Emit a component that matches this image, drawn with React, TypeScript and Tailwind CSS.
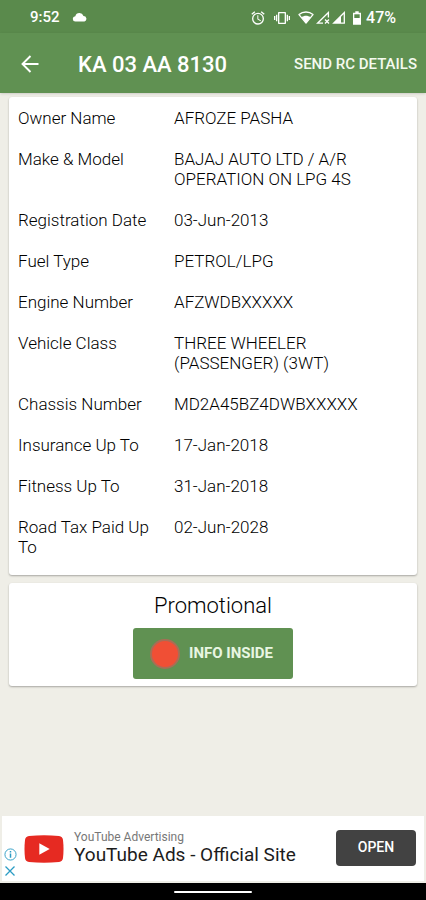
interface Detail {
  label: string;
  value: string;
}

const details: Detail[] = [
  { label: "Owner Name", value: "AFROZE PASHA" },
  { label: "Make & Model", value: "BAJAJ AUTO LTD / A/R OPERATION ON LPG 4S" },
  { label: "Registration Date", value: "03-Jun-2013" },
  { label: "Fuel Type", value: "PETROL/LPG" },
  { label: "Engine Number", value: "AFZWDBXXXXX" },
  { label: "Vehicle Class", value: "THREE WHEELER (PASSENGER) (3WT)" },
  { label: "Chassis Number", value: "MD2A45BZ4DWBXXXXX" },
  { label: "Insurance Up To", value: "17-Jan-2018" },
  { label: "Fitness Up To", value: "31-Jan-2018" },
  { label: "Road Tax Paid Up To", value: "02-Jun-2028" },
];

function StatusBar() {
  return (
    <div className="flex h-[33px] items-center bg-[#5a8a4c] px-[30px] pt-0.5 text-white">
      <span className="text-[15px] font-medium">9:52</span>
      {/* Weather */}
      <svg viewBox="0 0 16 10" className="ml-3 h-[9px] w-4" fill="currentColor">
        <path d="M3 9.4a2.9 2.9 0 0 1-.2-5.800A4.800 4.800 0 0 1 11.900 3.200 3.200 3.200 0 0 1 13 9.400Z" />
      </svg>
      <div className="ml-auto flex items-center">
        {/* Alarm */}
        <svg viewBox="0 0 24 24" className="h-4 w-4" fill="currentColor">
          <path d="m22 5.720-4.600-3.860-1.290 1.530 4.600 3.860L22 5.720zM7.880 3.390 6.600 1.860 2 5.710l1.290 1.530 4.590-3.850zM12.500 8H11v6l4.750 2.850.75-1.230-4-2.370V8zM12 4a9 9 0 1 0 0 18 9 9 0 0 0 0-18zm0 16a7 7 0 1 1 0-14 7 7 0 0 1 0 14z" />
        </svg>
        {/* Vibrate */}
        <svg viewBox="0 0 24 24" className="ml-2 h-4 w-4" fill="currentColor">
          <path d="M0 15h2V9H0v6zm3 2h2V7H3v10zm19-8v6h2V9h-2zm-3 8h2V7h-2v10zM16.500 3h-9C6.670 3 6 3.670 6 4.500v15c0 .83.67 1.500 1.500 1.500h9c.83 0 1.500-.67 1.500-1.500v-15c0-.83-.67-1.500-1.500-1.500zM16 19H8V5h8v14z" />
        </svg>
        {/* Wi-Fi */}
        <svg viewBox="0 0 16 13" className="ml-2 h-[13px] w-4">
          <path d="M1 3.600C5 .1 11 .1 15 3.600L8 12Z" fill="none" stroke="currentColor" strokeWidth="1.300" strokeLinejoin="round" />
          <path d="M3.600 6.300c2.600-2 6.200-2 8.800 0L8 12Z" fill="currentColor" />
        </svg>
        {/* Mobile signal, no service */}
        <svg viewBox="0 0 14 13" className="ml-0.5 h-[13px] w-3.5" fill="none" stroke="currentColor">
          <path d="M12.400 6.500V1.500L1.500 12.200h5.500" strokeWidth="1.300" />
          <path d="m9 8.500 4 4m0-4-4 4" strokeWidth="1.300" />
        </svg>
        {/* Mobile signal */}
        <svg viewBox="0 0 14 13" className="ml-0.5 h-[13px] w-3.5">
          <path d="M12.300 1.600v10.600H1.700Z" fill="none" stroke="currentColor" strokeWidth="1.300" />
          <path d="M9 5v7H2Z" fill="currentColor" />
        </svg>
        {/* Battery */}
        <svg viewBox="0 0 10 14" className="ml-1.5 h-3.5 w-2.5">
          <path d="M3.300.3h3.400v1.500H9v12H1v-12h2.300Z" fill="currentColor" />
          <path d="M2.300 3.300h5.400V7H2.300Z" fill="#5a8a4c" />
        </svg>
        <span className="ml-1 text-[16px] font-medium">47%</span>
      </div>
    </div>
  );
}

function Header() {
  return (
    <header className="flex h-[60px] items-center bg-[#609152] px-[9px] pt-0.5 text-white shadow-sm">
      <button type="button" aria-label="Back" className="ml-[9px] flex h-6 w-6 items-center justify-center">
        <svg viewBox="0 0 20 20" className="h-5 w-5" fill="none" stroke="currentColor" strokeWidth="1.900">
          <path d="M18.500 10H2.500M10.500 2l-8 8 8 8" />
        </svg>
      </button>
      <h1 className="ml-9 whitespace-nowrap text-[22px] font-medium">KA 03 AA 8130</h1>
      <button type="button" className="ml-auto whitespace-nowrap text-[15px] font-medium text-[#f4faef]">
        SEND RC DETAILS
      </button>
    </header>
  );
}

function DetailsCard() {
  return (
    <section className="rounded-[3px] bg-white px-[9px] pb-2 shadow-[0_1px_2px_rgba(0,0,0,0.3)]">
      <table className="w-full table-fixed border-collapse text-left text-[17px] font-[350] leading-5 text-black">
        <tbody>
          {details.map(({ label, value }) => (
            <tr key={label} className="align-top">
              <th scope="row" className="w-[156px] pb-[10px] pr-4 pt-[11px] font-[350]">
                {label}
              </th>
              <td className="pb-[10px] pr-8 pt-[11px]">{value}</td>
            </tr>
          ))}
        </tbody>
      </table>
    </section>
  );
}

function PromoCard() {
  return (
    <section className="flex flex-col items-center rounded-[3px] bg-white pb-[7px] pt-[9px] shadow-[0_1px_2px_rgba(0,0,0,0.3)]">
      <h2 className="text-[22px] font-[350] leading-7 text-black">Promotional</h2>
      <button
        type="button"
        className="mt-2 flex h-[51px] w-40 items-center rounded-[3px] bg-[#609152] pl-[17px] text-[15px] font-bold text-[#e8f6e2]"
      >
        <span className="mr-[9px] h-[30px] w-[30px] rounded-full border-2 border-[#a96d55] bg-[#f04f35]" />
        INFO INSIDE
      </button>
    </section>
  );
}

function AdBanner() {
  return (
    <aside className="mx-0.5 mb-0.5 flex h-[65px] items-center bg-white pr-2">
      <div className="flex w-4 flex-col items-center gap-1 self-end pb-1 text-[#2b9cc4]">
        <button type="button" aria-label="Ad info">
          <svg viewBox="0 0 14 14" className="h-[13px] w-[13px]" fill="none" stroke="currentColor">
            <circle cx="7" cy="7" r="6" />
            <path d="M7 6v4.500M7 3.200v1.600" strokeWidth="1.600" />
          </svg>
        </button>
        <button type="button" aria-label="Close ad">
          <svg viewBox="0 0 12 12" className="h-3 w-3" fill="none" stroke="currentColor" strokeWidth="1.300">
            <path d="m1.500 1.500 9 9m0-9-9 9" />
          </svg>
        </button>
      </div>
      <svg viewBox="0 0 40 28" className="ml-1.5 h-7 w-10 shrink-0">
        <path d="M5 .9Q20-.5 35 .9q3.600.4 4 4Q40 14 39 23.100q-.4 3.600-4 4Q20 28.500 5 27.100q-3.600-.4-4-4Q0 14 1 4.900 1.400 1.300 5 .9Z" fill="#e62a22" />
        <path d="M15.300 8.200v11.600L25.700 14Z" fill="#fff" />
      </svg>
      <div className="mb-1 ml-2.5 whitespace-nowrap">
        <p className="text-[12px] leading-4 text-[#777]">YouTube Advertising</p>
        <p className="text-[19px] leading-5 text-[#1c1c1c]">YouTube Ads - Official Site</p>
      </div>
      <button
        type="button"
        className="mb-0.5 ml-auto h-9 w-20 shrink-0 rounded bg-[#424242] text-[14px] font-medium text-white"
      >
        OPEN
      </button>
    </aside>
  );
}

export default function App() {
  return (
    <div className="flex min-h-screen flex-col bg-[#efeee7] font-[Roboto,sans-serif]">
      <StatusBar />
      <Header />
      <main className="flex flex-1 flex-col gap-2 px-[9px] pb-2 pt-1">
        <DetailsCard />
        <PromoCard />
      </main>
      <AdBanner />
      <div className="flex h-[17px] items-center justify-center bg-black">
        <div className="h-0.5 w-[78px] rounded-full bg-white" />
      </div>
    </div>
  );
}
